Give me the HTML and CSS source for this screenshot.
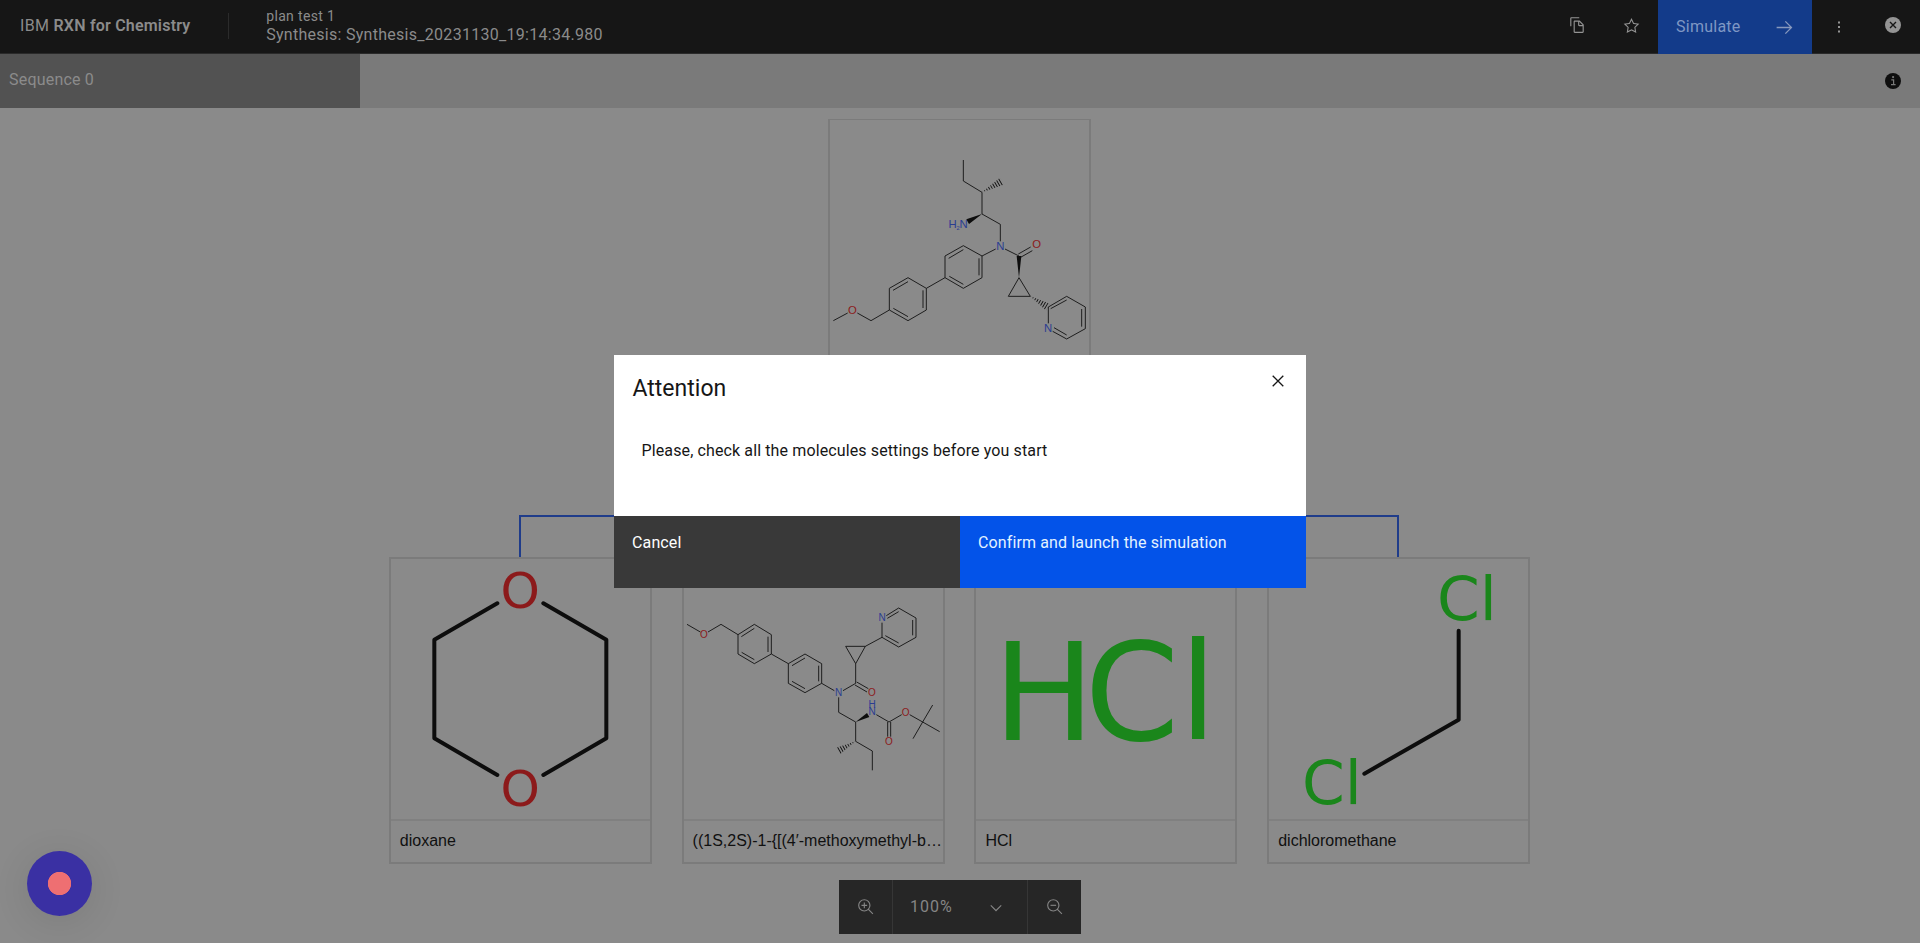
FILE: index.html
```html
<!DOCTYPE html>
<html lang="en">
<head>
<meta charset="utf-8">
<title>IBM RXN for Chemistry</title>
<link rel="stylesheet" href="styles.css">
</head>
<body>
<div class="app">
  <header class="header">
    <div class="brand"><span class="brand-ibm">IBM</span><b>RXN for Chemistry</b></div>
    <div class="titles">
      <div class="plan">plan test 1</div>
      <div class="synthesis">Synthesis: Synthesis_20231130_19:14:34.980</div>
    </div>
    <div class="actions">
      <span class="action"><svg class="ico-copy" viewBox="0 0 32 32"><path d="M27.4,14.7l-6.1-6.1C21,8.2,20.5,8,20,8h-8c-1.1,0-2,0.9-2,2v18c0,1.1,0.9,2,2,2h14c1.1,0,2-0.9,2-2V16.1C28,15.6,27.8,15.1,27.4,14.7z M20,10l5.9,6H20V10z M12,28V10h6v6c0,1.1,0.9,2,2,2h6l0,10H12z"/><path d="M6,18H4V4c0-1.1,0.9-2,2-2h14v2H6V18z"/></svg></span>
      <span class="action"><svg class="ico-star" viewBox="0 0 32 32"><path d="M16,6.52l2.76,5.58.46,1,1,.15,6.16.89L22,18.44l-.75.73.18,1,1.05,6.13-5.51-2.89L16,23l-.93.49L9.56,26.34l1-6.13.18-1L10,18.44,5.58,14.09l6.16-.89,1-.15.46-1L16,6.52M16,2l-4.55,9.22L1.28,12.69l7.36,7.18L6.9,30,16,25.22,25.1,30,23.36,19.87l7.36-7.17L20.55,11.22Z"/></svg></span>
      <button class="simulate">Simulate<svg class="ico-arrow" viewBox="0 0 32 32"><path d="M18 6 16.57 7.393 24.15 15 4 15 4 17 24.15 17 16.57 24.573 18 26 28 16z"/></svg></button>
      <span class="action"><svg class="ico-dots" viewBox="0 0 16 16"><path d="M7 2.5h2v2H7zM7 7h2v2H7zM7 11.5h2v2H7z"/></svg></span>
      <span class="action"><svg class="ico-close" viewBox="0 0 16 16"><circle cx="8" cy="8" r="8"/><path class="cross" d="M5 5l6 6M11 5l-6 6"/></svg></span>
    </div>
  </header>
  <nav class="tabs">
    <div class="tab">Sequence 0</div>
    <span class="info"><svg viewBox="0 0 16 16"><circle cx="8" cy="8" r="8"/><path class="mark" d="M6.3 6.8H8.6V11.6M6 11.7H10.6"/><circle class="dot" cx="8.1" cy="4.1" r="1.1"/></svg></span>
  </nav>

  <main class="canvas">
    <div class="node root">
      <svg class="molecule thin" viewBox="30 30 777 780">
        <defs>
          <clipPath id="h1"><path d="M486 247L540 203L551 224Z"/></clipPath>
          <clipPath id="h2"><path d="M631 559L690 581L679 602Z"/></clipPath>
        </defs>
        <path d="M430 150V213L486 247V312L541 343V394M527 417L486 438V503L430 535L375 503V438L430 407L486 438M477 445V496M430 523L388 499M386 445L430 419M375 503L319 535V600L264 632L208 600V535L264 503L319 535M309 541V594M264 620L220 595M219 541L264 515M208 600L153 632L112 609M83 609L40 632M555 417L597 438M595 432L632 411M600 443L637 422M597 503L565 559H631ZM685 591L740 559L796 591V656L740 687L698 664M692 596L740 570M785 597V650M740 675L702 653M685 591V640"/>
        <path class="wedge" d="M486 312L439 328L447 342ZM597 503L590 438H604Z"/>
        <path class="hash" clip-path="url(#h1)" d="M486 247L548 211"/>
        <path class="hash" clip-path="url(#h2)" d="M631 559L685 591"/>
        <g class="atoms">
          <text class="n" x="541" y="420">N</text><text class="n" x="431" y="355">N</text><text class="n" x="398" y="355">H</text><text class="n sub" x="414" y="361">2</text>
          <text class="o" x="650" y="415">O</text><text class="o" x="97" y="612">O</text><text class="n" x="684" y="667">N</text>
        </g>
      </svg>
    </div>
    <div class="connector"></div>
    <div class="children">
      <div class="node">
        <svg class="molecule thick" viewBox="33 177 777 780">
          <path d="M352 310L163 419V715L352 825M490 310L679 419V715L490 825"/>
          <text class="o" x="361.6" y="325">O</text><text class="o" x="361.6" y="919">O</text>
        </svg>
        <div class="caption">dioxane</div>
      </div>
      <div class="node">
        <svg class="molecule thin" viewBox="41 27 777 780">
          <defs><clipPath id="h3"><path d="M556 574L509 613L498 593Z"/></clipPath></defs>
          <path d="M50 223L90 246M113 246L152 223L203 254L252 223L303 254V312L252 341L203 312V254M213 260L252 235M293 260V306M252 329L214 307M303 312L354 341L404 312L454 341V400L404 428L354 400V341M365 347L404 324M445 347V394M404 416L365 394M454 400L492 422M518 422L556 400V341L526 289H585L556 341M554 405L590 426M559 396L594 416M585 289L635 262V218M648 197L685 174L737 204V262L685 291L635 262M651 205L685 185M727 210V256M685 279L645 257M505 442V487L556 516V574L606 603V661M618 494L656 516L694 494M652 516V560M661 516V560M718 494L757 516L787 465M757 516L808 545M757 516L728 566"/>
          <path class="wedge" d="M556 516L590 489L597 501Z"/>
          <path class="hash" clip-path="url(#h3)" d="M556 574L503 604"/>
          <g class="atoms small">
            <text class="o" x="101" y="264">O</text><text class="n" x="505" y="439">N</text><text class="o" x="605" y="438">O</text>
            <text class="n" x="635" y="214">N</text><text class="n" x="605" y="473">H</text><text class="n" x="605" y="496">N</text>
            <text class="o" x="706" y="497">O</text><text class="o" x="656" y="584">O</text>
          </g>
        </svg>
        <div class="caption">((1S,2S)-1-{[(4′-methoxymethyl-b…</div>
      </div>
      <div class="node">
        <svg class="molecule huge" viewBox="51 177 777 780"><text class="cl" x="102" y="719">H</text><text class="cl" x="377" y="719">C</text><text class="cl" x="661" y="717">l</text></svg>
        <div class="caption">HCl</div>
      </div>
      <div class="node">
        <svg class="molecule thick large" viewBox="59 177 777 780">
          <path d="M628 392V659L345 821"/>
          <text class="cl" x="562.7" y="360">Cl</text><text class="cl" x="158" y="911">Cl</text>
        </svg>
        <div class="caption">dichloromethane</div>
      </div>
    </div>
  </main>

  <div class="zoom-bar">
    <span class="zoom-btn"><svg viewBox="0 0 32 32"><path d="M18 12 14 12 14 8 12 8 12 12 8 12 8 14 12 14 12 18 14 18 14 14 18 14z"/><path d="M21.4479,20A10.856,10.856,0,0,0,24,13,11,11,0,1,0,13,24a10.856,10.856,0,0,0,7-2.5521L27.5859,29,29,27.5859ZM13,22a9,9,0,1,1,9-9A9.01,9.01,0,0,1,13,22Z"/></svg></span>
    <span class="zoom-value">100%<svg viewBox="0 0 16 16"><path d="M8 11 3 6l.7-.7L8 9.6l4.3-4.3.7.7z"/></svg></span>
    <span class="zoom-btn"><svg viewBox="0 0 32 32"><path d="M8 12h10v2H8z"/><path d="M21.4479,20A10.856,10.856,0,0,0,24,13,11,11,0,1,0,13,24a10.856,10.856,0,0,0,7-2.5521L27.5859,29,29,27.5859ZM13,22a9,9,0,1,1,9-9A9.01,9.01,0,0,1,13,22Z"/></svg></span>
  </div>
  <div class="recorder"></div>

  <div class="overlay">
    <section class="modal">
      <div class="modal-head"><h2>Attention</h2><svg class="modal-close" viewBox="0 0 12 12"><path d="M.7.7l10.6 10.6M11.3.7L.7 11.3"/></svg></div>
      <p class="modal-text">Please, check all the molecules settings before you start</p>
      <div class="modal-buttons">
        <button class="cancel">Cancel</button>
        <button class="confirm">Confirm and launch the simulation</button>
      </div>
    </section>
  </div>
</div>
</body>
</html>
```
FILE: styles.css
```css
* { box-sizing: border-box; }
body { margin: 0; font-family: Roboto, sans-serif; font-size: 16px; }
button { border: 0; font: inherit; text-align: left; }
svg { display: block; }

.app { position: relative; width: 1920px; height: 943px; overflow: hidden; background: #8a8a8a; }

.header { display: flex; height: 54px; background: #161616; border-bottom: 1px solid #2a2a2a; color: #8b8b8b; }
.brand { display: flex; gap: 4px; width: 229px; height: 26px; margin-top: 13px; padding-left: 20px; border-right: 1px solid #2b2b2b; line-height: 26px; white-space: nowrap; }
.brand-ibm { letter-spacing: .4px; }
.brand b { font-weight: 600; letter-spacing: .2px; }
.titles { padding: 7px 0 0 37.2px; white-space: nowrap; }
.plan { font-size: 14px; line-height: 18px; letter-spacing: .34px; }
.synthesis { line-height: 19px; letter-spacing: .28px; }
.actions { display: flex; height: 54px; margin-left: auto; }
.action { display: flex; width: 54px; align-items: center; justify-content: center; fill: #949494; }
.ico-copy { width: 18px; height: 18px; margin: 0 1px 4px 0; }
.ico-star { width: 17px; height: 17px; margin: 0 0 3px 0; }
.simulate { display: flex; width: 154px; height: 54px; padding: 0 17px 2px 18px; align-items: center; justify-content: space-between; background: #133b8a; color: #7f97c4; letter-spacing: .25px; }
.ico-arrow { width: 21px; height: 21px; fill: #8798bd; margin-top: 2px; }
.ico-dots { width: 16px; height: 16px; }
.ico-close { width: 16px; height: 16px; margin-bottom: 4px; }
.cross { fill: none; stroke: #161616; stroke-width: 1.4; }

.tabs { display: flex; height: 54px; justify-content: space-between; background: #7a7a7a; }
.tab { width: 360px; padding-left: 9px; background: #525252; color: #8b8b8b; line-height: 52px; letter-spacing: .2px; }
.info { display: flex; width: 54px; align-items: center; justify-content: center; }
.info svg { width: 16px; height: 16px; fill: #0f0f0f; }
.info .mark { fill: none; stroke: #7a7a7a; stroke-width: 1.2; }
.info .dot { fill: #7a7a7a; }

.canvas { display: flex; flex-direction: column; align-items: center; padding-top: 11px; }
.node { width: 263px; border: 2px solid #7b7b7b; }
.root { height: 305px; margin-right: 1px; border-top-width: 1px; }
.connector { width: 880px; height: 43px; margin-top: 91px; margin-right: 2px; border: 2px solid #1f3c8a; border-bottom: 0; }
.children { display: flex; gap: 29.8px; margin: -1px 1px 0 0; }
.molecule { width: 259px; height: 260px; }
.caption { height: 43px; padding: 0 0 0 9px; border-top: 2px solid #808080; color: #101010; font-family: "Liberation Sans", Arial, sans-serif; line-height: 40px; white-space: nowrap; }

.molecule path { fill: none; stroke: #0d0d0d; }
.molecule clipPath path { stroke: none; fill: #000; }
.thin path { stroke-width: 2.6; }
.molecule .wedge { fill: #0d0d0d; stroke: none; }
.molecule .hash { stroke-width: 26; stroke-dasharray: 2.6 5.2; }
.thick path { stroke-width: 12; stroke-linecap: round; stroke-linejoin: round; }
.molecule text { font-family: "DejaVu Sans", sans-serif; font-size: 150px; }
.molecule .atoms text { font-family: "Liberation Sans", Arial, sans-serif; font-size: 34px; text-anchor: middle; }
.molecule .small text { font-size: 30px; }
.molecule .atoms .sub { font-size: 17px; }
.molecule.huge text { font-size: 406px; }
.molecule.large text { font-size: 184px; }
.molecule .o { fill: #8c1a1b; }
.molecule .n { fill: #2b3d92; }
.molecule .cl { fill: #1a861b; }

.zoom-bar { position: absolute; left: 839px; top: 880px; display: flex; width: 242px; height: 54px; background: #262626; color: #858585; fill: #858585; }
.zoom-btn { display: flex; width: 53px; align-items: center; justify-content: center; }
.zoom-btn svg { width: 18px; height: 18px; }
.zoom-value { display: flex; flex: 1; align-items: center; justify-content: space-between; padding: 0 22px 1px 17px; border: solid #363636; border-width: 0 1px; letter-spacing: 1px; }
.zoom-value svg { width: 18px; height: 18px; margin-top: 3px; }

.recorder { position: absolute; left: 27px; top: 851px; width: 65px; height: 65px; border-radius: 50%; background: radial-gradient(circle, #ee6f72 11.3px, #3a30a3 12px); box-shadow: 0 6px 36px rgba(0, 0, 0, .1); }

.overlay { position: absolute; inset: 0; display: flex; align-items: center; justify-content: center; }
.modal { display: flex; flex-direction: column; width: 692px; height: 233px; background: #fff; color: #161616; }
.modal-head { display: flex; justify-content: space-between; padding: 20px 22px 0 18.5px; }
.modal h2 { margin: 1px 0 0; font-size: 23px; font-weight: 400; line-height: 26px; }
.modal-close { width: 12px; height: 12px; fill: none; stroke: #161616; stroke-width: 1.3; }
.modal-text { margin: 39px 0 0 27.5px; line-height: 20px; letter-spacing: .12px; }
.modal-buttons { display: flex; height: 72px; margin-top: auto; }
.modal-buttons button { display: flex; flex: 1; align-items: flex-start; padding: 17px 18px; color: #fff; line-height: 20px; letter-spacing: .13px; }
.cancel { background: #393939; }
.modal-buttons .confirm { background: #0353e9; color: #e4f2ff; }
```
